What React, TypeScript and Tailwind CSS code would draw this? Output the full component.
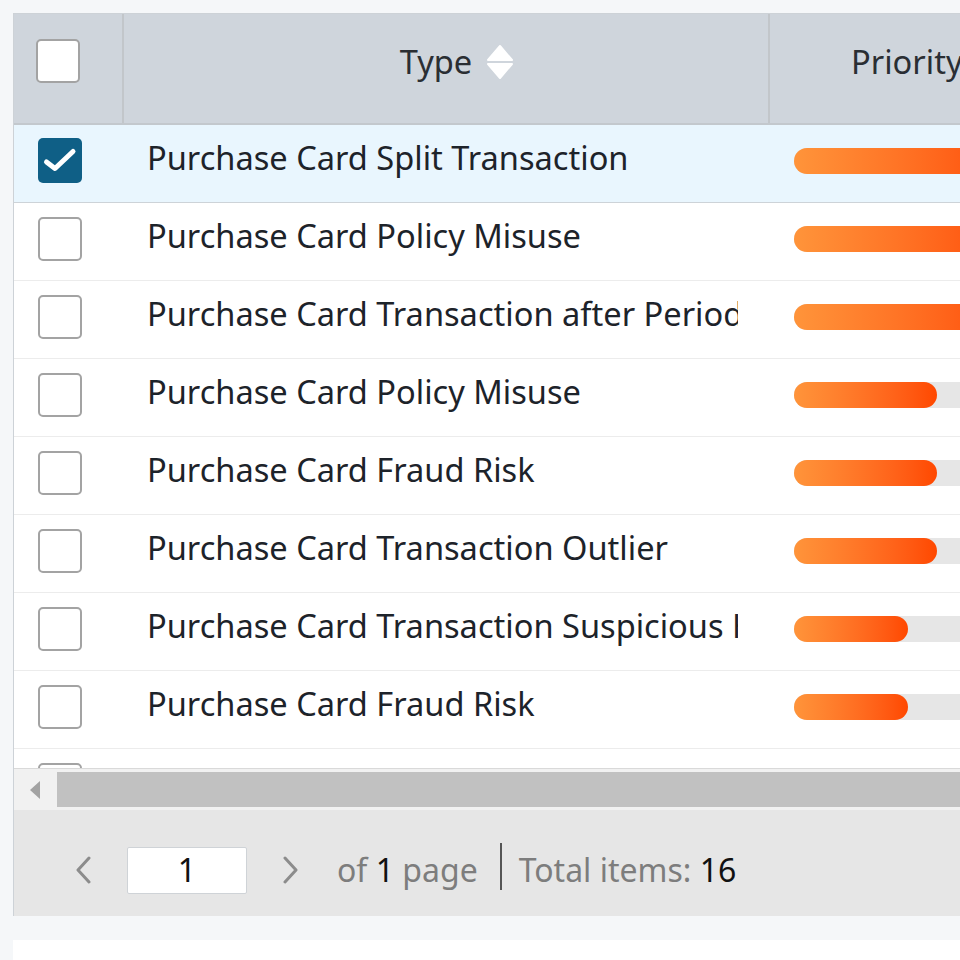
import React from "react";

type Row = {
  type: string;
  bar: number;
  checked?: boolean;
};

const rows: Row[] = [
  { type: "Purchase Card Split Transaction", bar: 220, checked: true },
  { type: "Purchase Card Policy Misuse", bar: 220 },
  { type: "Purchase Card Transaction after Period", bar: 220 },
  { type: "Purchase Card Policy Misuse", bar: 143 },
  { type: "Purchase Card Fraud Risk", bar: 143 },
  { type: "Purchase Card Transaction Outlier", bar: 143 },
  { type: "Purchase Card Transaction Suspicious Hours", bar: 114 },
  { type: "Purchase Card Fraud Risk", bar: 114 },
  { type: "", bar: 114 },
];

function Checkbox({ checked, className = "" }: { checked?: boolean; className?: string }) {
  if (checked) {
    return (
      <div className={`w-[44px] h-[45px] rounded-[5px] bg-[#0f5f86] flex items-center justify-center shrink-0 ${className}`}>
        <svg width="44" height="45" viewBox="0 0 44 45">
          <path d="M8.5 24 L17 30.5 L35 13.5" fill="none" stroke="#fff" strokeWidth="5" strokeLinecap="round" strokeLinejoin="round" />
        </svg>
      </div>
    );
  }
  return (
    <div className={`w-[44px] h-[44px] rounded-[5px] bg-white border-2 border-[#a3a3a3] shrink-0 ${className}`} />
  );
}

function SortIcon() {
  return (
    <svg width="28" height="36" viewBox="0 0 28 36" className="shrink-0">
      <path d="M2 16 L14 2 L26 16 Z" fill="#fff" stroke="#fff" strokeWidth="2" strokeLinejoin="round" />
      <path d="M2 20 L26 20 L14 34 Z" fill="#fff" stroke="#fff" strokeWidth="2" strokeLinejoin="round" />
    </svg>
  );
}

function Chevron({ dir }: { dir: "left" | "right" }) {
  return (
    <svg width="16" height="28" viewBox="0 0 16 28" className="shrink-0">
      <path
        d={dir === "left" ? "M14 2 L3 14 L14 26" : "M2 2 L13 14 L2 26"}
        fill="none"
        stroke="#8c8c8c"
        strokeWidth="3"
        strokeLinecap="round"
        strokeLinejoin="round"
      />
    </svg>
  );
}

export default function App() {
  return (
    <div className="w-[960px] h-[960px] overflow-hidden bg-[#f5f7f9] font-['Noto_Sans',sans-serif]">
      <div className="pt-[13px] pl-[13px]">
        <div className="w-[1200px] border-l border-t border-[#cdd2d7] bg-white">
          {/* Header */}
          <div className="flex h-[111px] bg-[#cfd5dc] border-b-2 border-[#c3c8cd]">
            <div className="w-[110px] border-r-2 border-[#c2c6ca] flex items-center pl-[22px] pb-[16px]">
              <Checkbox />
            </div>
            <div className="w-[646px] border-r-2 border-[#c2c6ca] flex items-center justify-center pl-[22px] pb-[14px]">
              <span className="text-[32.6px] leading-[44px] text-[#2a2e33]">Type</span>
              <span className="ml-[14px]">
                <SortIcon />
              </span>
            </div>
            <div className="flex-1 flex items-center pl-[81px] pb-[14px]">
              <span className="text-[32.6px] leading-[44px] text-[#2a2e33] whitespace-nowrap">Priority</span>
            </div>
          </div>

          {/* Body */}
          <div className="h-[643px] overflow-hidden">
            {rows.map((r, i) => (
              <div
                key={i}
                className={`flex items-center h-[78px] border-b pb-[6px] ${
                  r.checked ? "bg-[#e9f6fe] border-[#cdd3d8]" : "bg-white border-[#ececec]"
                }`}
              >
                <div className="w-[110px] pl-[24px] flex items-center">
                  <Checkbox checked={r.checked} />
                </div>
                <div className="w-[646px] pl-[23px] pr-[32px] pb-[5px]">
                  <div className="h-[44px] text-[32.6px] leading-[44px] text-[#1d232a] whitespace-nowrap overflow-x-hidden">
                    {r.type}
                  </div>
                </div>
                <div className="flex-1 pl-[24px]">
                  <div className="w-[300px] h-[26px] rounded-full bg-[#e6e6e6]">
                    <div
                      className="h-[26px] rounded-full bg-gradient-to-r from-[#ff943a] to-[#ff4800]"
                      style={{ width: r.bar }}
                    />
                  </div>
                </div>
              </div>
            ))}
          </div>

          {/* Horizontal scrollbar */}
          <div className="h-[42px] border-t border-[#d9d9d9] bg-[#f1f1f1] flex items-center">
            <div className="w-[42px] h-full flex items-center justify-center">
              <svg width="12" height="20" viewBox="0 0 12 20">
                <path d="M11 1 L1 10 L11 19 Z" fill="#a3a3a3" />
              </svg>
            </div>
            <div className="flex-1 h-[35px] bg-[#c1c1c1] ml-[1px]" />
          </div>

          {/* Footer / pager */}
          <div className="h-[106px] bg-[#e6e6e6] flex items-center pt-[14px]">
            <div className="ml-[61px]">
              <Chevron dir="left" />
            </div>
            <div className="ml-[36px] w-[120px] h-[47px] bg-white border border-[#cfd3d7] rounded-[2px] flex items-center justify-center text-[32px] text-[#111]">
              1
            </div>
            <div className="ml-[36px]">
              <Chevron dir="right" />
            </div>
            <div className="ml-[38px] text-[32px] leading-[44px] text-[#7d7d7d] whitespace-nowrap">
              of <span className="text-[#111]">1</span> page
            </div>
            <div className="ml-[22px] w-[2px] h-[47px] bg-[#555] -mt-[8px]" />
            <div className="ml-[17px] text-[32px] leading-[44px] text-[#7d7d7d] whitespace-nowrap">
              Total items: <span className="text-[#111]">16</span>
            </div>
          </div>
        </div>

        <div className="h-[24px]" />
        <div className="w-[1200px] h-[40px] bg-white" />
      </div>
    </div>
  );
}
